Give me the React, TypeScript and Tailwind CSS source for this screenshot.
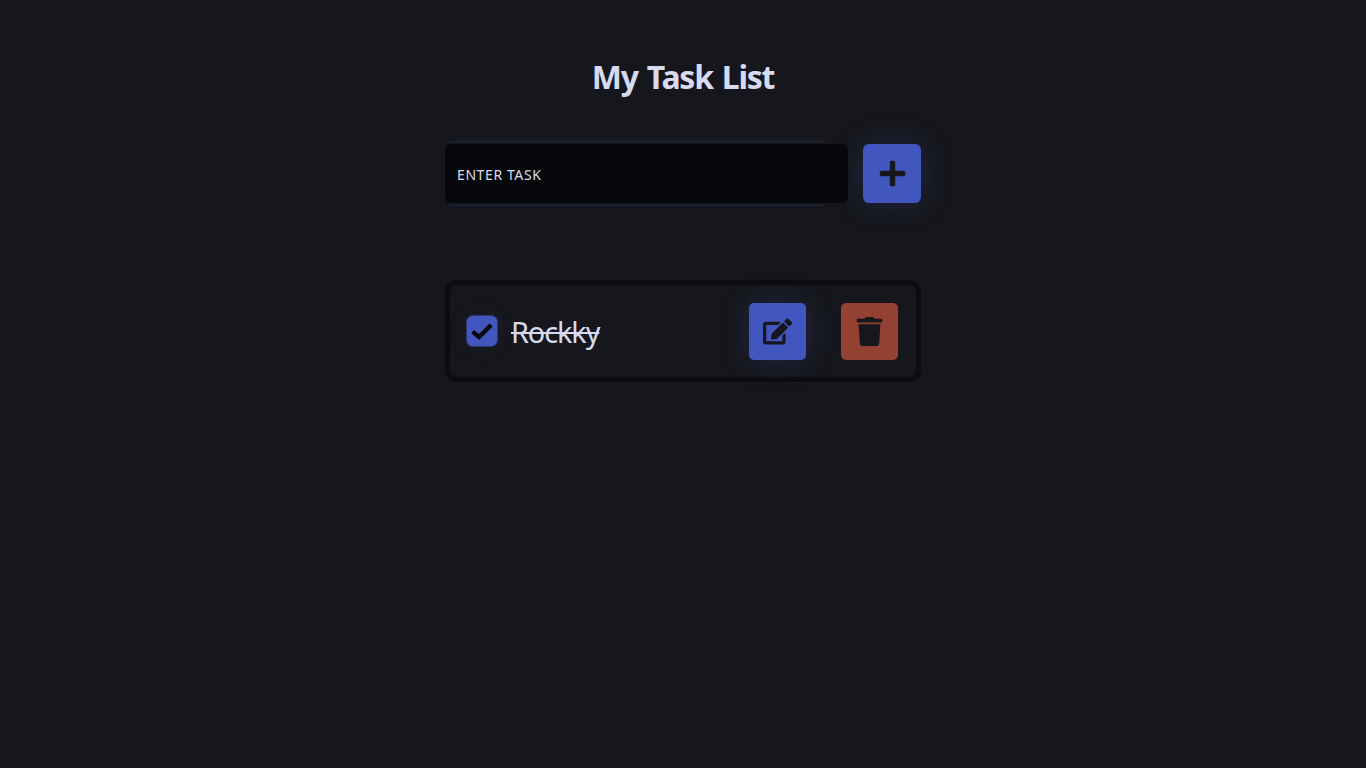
import { useState } from "react";
import { FaEdit, FaPlus, FaTrash } from "react-icons/fa";

function CheckMark() {
  return (
    <svg viewBox="0 0 22 18" className="h-[18px] w-[22px]" fill="none" aria-hidden="true">
      <path
        d="M1.6 9.6 L8 15 L20.2 3"
        stroke="currentColor"
        strokeWidth="4.4"
        strokeLinejoin="miter"
      />
    </svg>
  );
}

export default function App() {
  const [tasks] = useState([{ id: 1, name: "Rockky", done: true }]);

  return (
    <main className="flex min-h-screen flex-col items-center bg-[#16171c] font-['Noto_Sans','Open_Sans',sans-serif] text-[#d8daf0]">
      <div className="flex w-[476px] flex-col">
        <h1 className="mt-[55px] h-[45px] text-center text-[32px] leading-[44px] font-bold tracking-[-1.25px] [word-spacing:2px] whitespace-nowrap">
          My Task List
        </h1>
        <form className="mt-[41px] flex h-[65px] items-center justify-between">
          <div className="z-10 flex h-[65px] w-[403px] flex-col justify-between">
            <div className="ml-[4px] h-px w-[375px] bg-[#212442]" />
            <div className="flex h-[59px] items-center rounded-[6px] bg-[#07080b] px-3 pt-[3px]">
              <span className="text-[14px] leading-5 tracking-[0.6px] whitespace-nowrap">ENTER TASK</span>
            </div>
            <div className="ml-[4px] h-px w-[375px] bg-[#212442]" />
          </div>
          <button
            type="button"
            aria-label="Add task"
            className="flex h-[59px] w-[58px] items-center justify-center rounded-[6px] bg-[#4256c0] text-[#16171c] shadow-[0_0_30px_rgba(66,86,192,0.25)]"
          >
            <FaPlus className="size-[29px]" />
          </button>
        </form>
        <ul className="mt-[74px] flex flex-col">
          {tasks.map((task) => (
            <li
              key={task.id}
              className="flex h-[102px] items-center rounded-[12px] border-[5px] border-[#0c0d10] pr-[18px] pl-4"
            >
              <span className="flex h-8 w-8 items-center justify-center rounded-[7px] border-[1.5px] border-[#2c376f] bg-[#4256c0] pr-px text-[#07080b] shadow-[0_0_20px_rgba(66,86,192,0.1)]">
                <CheckMark />
              </span>
              <span className="ml-[13px] flex-1 pt-0.5 text-[28.8px] leading-10 tracking-[-1.05px] line-through decoration-2">
                {task.name}
              </span>
              <div className="flex gap-[35px]">
                <button
                  type="button"
                  aria-label="Edit task"
                  className="flex size-[57px] items-center justify-center rounded-[5px] bg-[#4256c0] text-[#16171c] shadow-[0_0_30px_rgba(66,86,192,0.25)]"
                >
                  <FaEdit className="size-[29px]" />
                </button>
                <button
                  type="button"
                  aria-label="Delete task"
                  className="flex size-[57px] items-center justify-center rounded-[5px] bg-[#924133] text-[#16171c]"
                >
                  <FaTrash className="size-[29px]" />
                </button>
              </div>
            </li>
          ))}
        </ul>
      </div>
    </main>
  );
}
